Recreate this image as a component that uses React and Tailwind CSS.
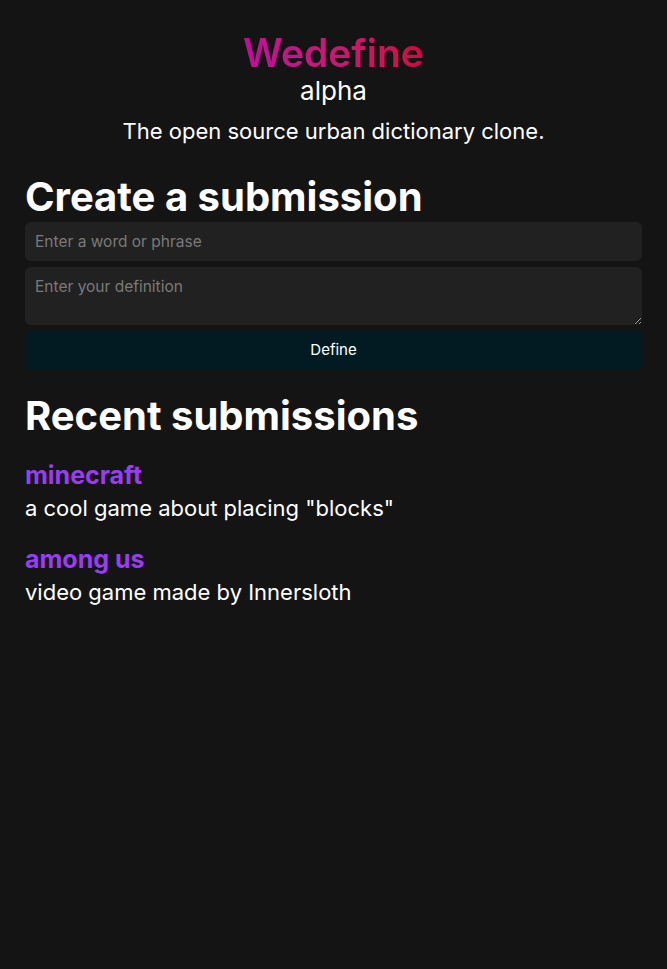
const posts = [
  { word: "minecraft", definition: 'a cool game about placing "blocks"' },
  { word: "among us", definition: "video game made by Innersloth" },
];

export default function App() {
  return (
    <div className="min-h-[969px] bg-[#141414] text-white px-[25px] pt-[30px]" style={{ fontFamily: "Inter, 'Noto Sans', sans-serif" }}>
      <header className="flex flex-col items-center">
        <h1 className="text-[39px] leading-[46px] font-semibold bg-gradient-to-r from-[#c4089f] to-[#d6063f] bg-clip-text text-transparent">
          Wedefine
        </h1>
        <p className="text-[26px] leading-[30px]">alpha</p>
        <p className="text-[22px] leading-[28px] mt-[11px]">The open source urban dictionary clone.</p>
      </header>

      <section className="mt-[30px]">
        <h2 className="text-[40px] leading-[44px] font-bold">Create a submission</h2>
        <form className="flex flex-col gap-[6px] mt-[3px]" onSubmit={(e) => e.preventDefault()}>
          <input
            className="h-[39px] rounded-md bg-[#212121] px-[10px] text-[15.5px] placeholder:text-[#7a7a7a] outline-none"
            placeholder="Enter a word or phrase"
          />
          <textarea
            className="h-[58px] rounded-md bg-[#212121] px-[10px] py-[8px] text-[15.5px] placeholder:text-[#7a7a7a] outline-none"
            placeholder="Enter your definition"
          />
          <button className="h-[39px] rounded-md bg-[#021b23] text-[15px]">Define</button>
        </form>
      </section>

      <section className="mt-[24px]">
        <h2 className="text-[40px] leading-[44px] font-bold">Recent submissions</h2>
        <div className="mt-[22px] flex flex-col gap-[22px]">
          {posts.map((p) => (
            <div key={p.word}>
              <h3 className="text-[25px] leading-[30px] font-bold text-[#9b3cf4]">{p.word}</h3>
              <p className="text-[22px] leading-[28px] mt-[4px]">{p.definition}</p>
            </div>
          ))}
        </div>
      </section>
    </div>
  );
}
